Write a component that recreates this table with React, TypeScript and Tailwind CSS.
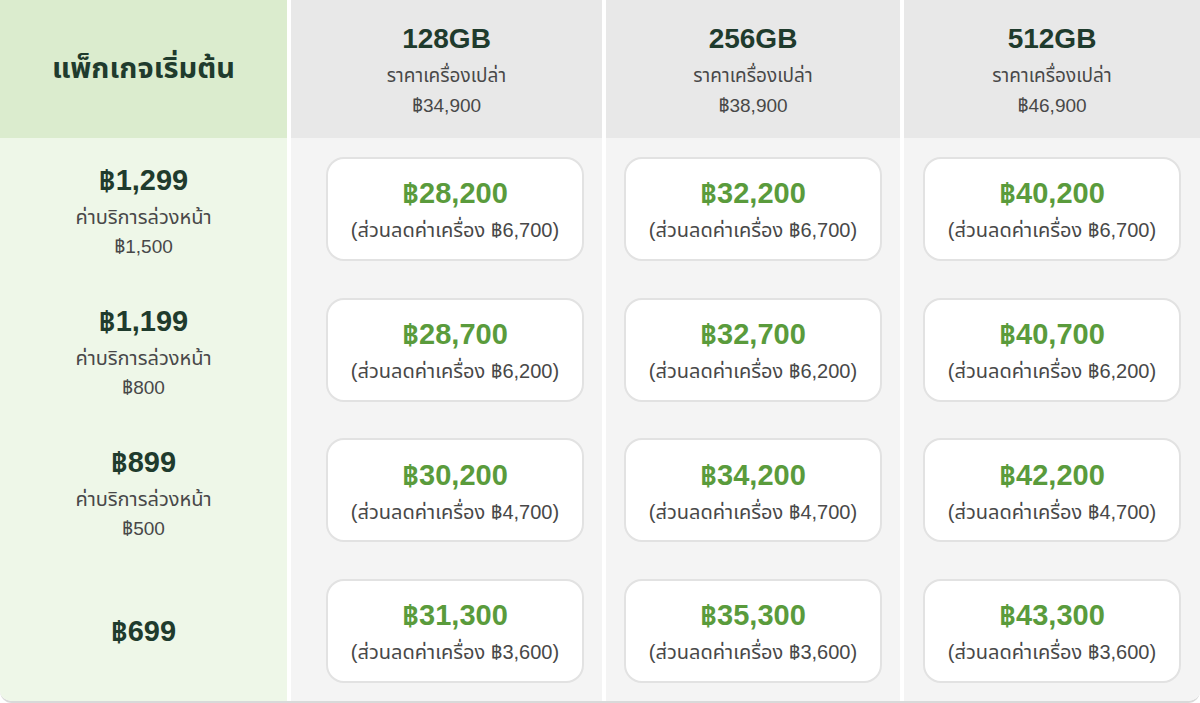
const columns = [
  { size: "128GB", price: "฿34,900", offset: true },
  { size: "256GB", price: "฿38,900", offset: false },
  { size: "512GB", price: "฿46,900", offset: false },
];

const plans = [
  { fee: "฿1,299", advance: "฿1,500", prices: ["฿28,200", "฿32,200", "฿40,200"], discount: "฿6,700" },
  { fee: "฿1,199", advance: "฿800", prices: ["฿28,700", "฿32,700", "฿40,700"], discount: "฿6,200" },
  { fee: "฿899", advance: "฿500", prices: ["฿30,200", "฿34,200", "฿42,200"], discount: "฿4,700" },
  { fee: "฿699", advance: null, prices: ["฿31,300", "฿35,300", "฿43,300"], discount: "฿3,600" },
];

function PriceCard({ price, discount }: { price: string; discount: string }) {
  return (
    <div className="flex h-[104px] w-[258px] flex-col items-center justify-center rounded-[18px] border-2 border-[#e2e2e2] bg-white pt-[2px]">
      <span className="text-[29px] leading-[34px] font-bold text-[#5a9b3c]">{price}</span>
      <span className="mt-[7px] text-[20px] leading-[26px] text-[#484848]">
        (ส่วนลดค่าเครื่อง {discount})
      </span>
    </div>
  );
}

export default function App() {
  return (
    <div
      className="h-[703px] w-[1200px] overflow-hidden bg-white"
      style={{ fontFamily: '"Liberation Sans", "Noto Sans Thai", "Noto Sans", sans-serif' }}
    >
      <div className="grid h-[703px] grid-cols-[287px_311px_294px_296px] grid-rows-[138px_141px_141px_140px_141px] gap-x-1 overflow-hidden rounded-b-xl border-b-2 border-[#d9d9d9] bg-white">
        {/* header row */}
        <div className="flex items-center justify-center bg-[#dbecce]">
          <span className="text-[29px] font-bold text-[#1f3b2d]">แพ็กเกจเริ่มต้น</span>
        </div>
        {columns.map((c) => (
          <div key={c.size} className="flex flex-col items-center bg-[#e8e8e8] pt-[22px]">
            <span className="text-[28px] leading-[34px] font-bold text-[#1f3b2d]">{c.size}</span>
            <span className="mt-[5px] text-[19px] leading-[30px] text-[#484848]">ราคาเครื่องเปล่า</span>
            <span className="text-[19px] leading-[30px] text-[#484848]">{c.price}</span>
          </div>
        ))}

        {/* body rows */}
        {plans.map((p) => (
          <>
            <div
              key={p.fee}
              className={
                p.advance
                  ? "flex flex-col items-center justify-center bg-[#eef7e8] pt-[8px]"
                  : "flex flex-col items-center justify-center bg-[#eef7e8]"
              }
            >
              <span className="text-[29px] leading-[34px] font-bold text-[#1f3b2d]">{p.fee}</span>
              {p.advance && (
                <>
                  <span className="mt-[5px] text-[20px] leading-[30px] text-[#484848]">ค่าบริการล่วงหน้า</span>
                  <span className="text-[19px] leading-[30px] text-[#484848]">{p.advance}</span>
                </>
              )}
            </div>
            {columns.map((c, i) => (
              <div
                key={p.fee + c.size}
                className={
                  c.offset
                    ? "flex items-center justify-center bg-[#f4f4f4] pl-[17px]"
                    : "flex items-center justify-center bg-[#f4f4f4]"
                }
              >
                <PriceCard price={p.prices[i]} discount={p.discount} />
              </div>
            ))}
          </>
        ))}
      </div>
    </div>
  );
}
